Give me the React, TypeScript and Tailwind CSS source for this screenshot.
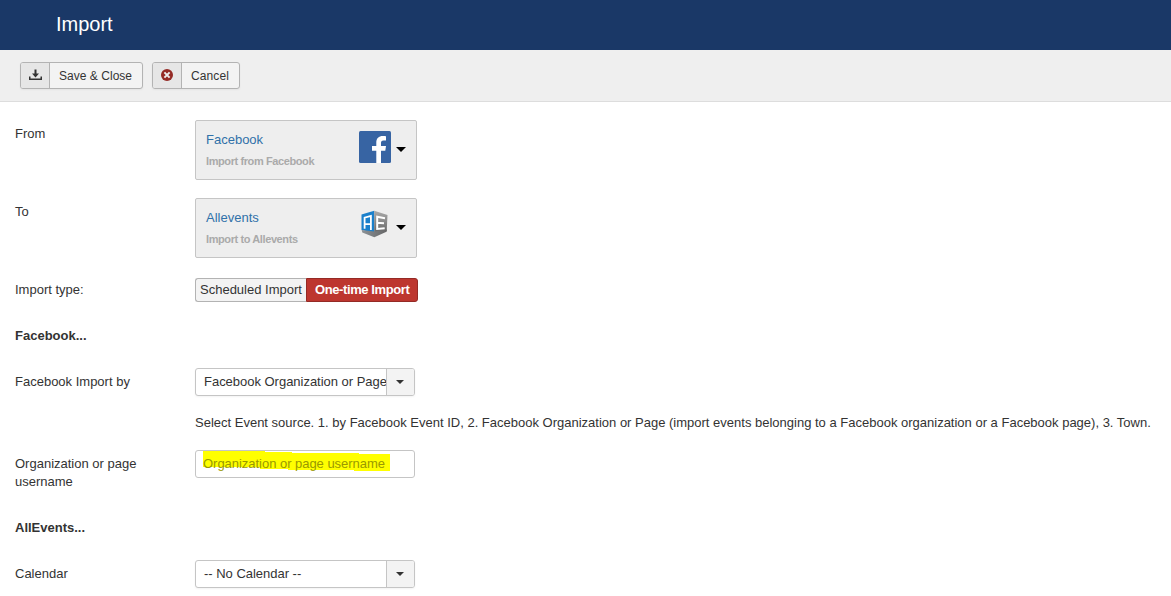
import type { ReactNode } from "react";

function Caret({ dark = false }: { dark?: boolean }) {
  return dark ? (
    <svg width="10" height="5" viewBox="0 0 10 5" className="block">
      <path d="M0 0h10L5 5z" fill="#000" />
    </svg>
  ) : (
    <svg width="8" height="4" viewBox="0 0 8 4" className="mr-px mb-px block">
      <path d="M0 0h8L4 4z" fill="#333" />
    </svg>
  );
}

function ToolButton({ icon, className, children }: { icon: ReactNode; className: string; children: ReactNode }) {
  return (
    <button
      className={`flex h-[27px] items-stretch overflow-hidden rounded-[3px] border border-[#b3b3b3] bg-[#f3f3f3] text-xs shadow-[0_1px_2px_rgba(0,0,0,0.05)] ${className}`}
    >
      <span className="flex w-[29px] shrink-0 items-center justify-center border-r border-[#b3b3b3] bg-[#e6e6e6] pb-px">{icon}</span>
      <span className="flex-1 whitespace-nowrap pl-[9px] text-left leading-[27px]">{children}</span>
    </button>
  );
}

function Row({ label, className, children }: { label: ReactNode; className: string; children?: ReactNode }) {
  return (
    <div className={`flex items-start ${className}`}>
      <div className="w-[180px] shrink-0 pt-[5px] pr-8">{label}</div>
      {children}
    </div>
  );
}

function SourceCard({ title, note, logo }: { title: ReactNode; note: ReactNode; logo: ReactNode }) {
  return (
    <div className="flex h-[60px] w-[222px] rounded-[2px] border border-[#c5c5c5] bg-[#eee] pl-[10px]">
      <div className="w-[153px] pt-[10px]">
        <div className="text-[#3071a9]">{title}</div>
        <div className="mt-[3px] text-[11px] font-bold tracking-[-0.4px] text-[#aaa]">{note}</div>
      </div>
      <div className="pt-[10px]">{logo}</div>
      <div className="pt-[26px] pl-[5px]">
        <Caret dark />
      </div>
    </div>
  );
}

function Select({ children }: { children: ReactNode }) {
  return (
    <div className="flex h-7 w-[220px] overflow-hidden rounded-[3px] border border-[#c5c5c5] bg-white shadow-[0_1px_2px_rgba(0,0,0,0.05)]">
      <div className="w-[190px] whitespace-nowrap pl-2 leading-[26px] tracking-[-0.02px]">{children}</div>
      <div className="flex flex-1 items-center justify-center border-l border-[#c5c5c5] bg-[#f3f3f3]">
        <Caret />
      </div>
    </div>
  );
}

function SaveIcon() {
  return (
    <svg width="13" height="12" viewBox="0 0 13 12">
      <path d="M5.500 0.500h2v4H10L6.500 8.500 3 4.500h2.500z" fill="#333" />
      <path d="M0 7.500h1.500v2h10v-2H13v3.500H0z" fill="#333" />
    </svg>
  );
}

function CancelIcon() {
  return (
    <svg width="12" height="12" viewBox="0 0 12 12">
      <circle cx="6" cy="6" r="6" fill="#942a25" />
      <path d="M3.400 3.400l5.200 5.200M8.600 3.400L3.400 8.600" stroke="#eee" strokeWidth="2" />
    </svg>
  );
}

function FacebookLogo() {
  return (
    <svg width="32" height="32" viewBox="0 0 32 32" className="block">
      <rect width="32" height="32" rx="1.500" fill="#3764a3" />
      <path d="M17.300 32V19.700H13v-4.700h4.300v-3.500c0-4.300 2.600-6.500 6.400-6.500 1.500 0 2.600.1 3.300.2v4.300h-2.500c-2 0-2.500 1-2.500 2.500v3H27l-.7 4.700H22V32z" fill="#fff" />
    </svg>
  );
}

function AlleventsLogo() {
  return (
    <svg width="32" height="32" viewBox="0 0 32 32" className="block">
      <defs>
        <linearGradient id="cubeRight" x1="0" y1="0" x2="0" y2="1">
          <stop offset="0" stopColor="#aaa" />
          <stop offset="1" stopColor="#666" />
        </linearGradient>
        <linearGradient id="cubeBase" x1="0" y1="0" x2="1" y2="0">
          <stop offset="0" stopColor="#8c9297" />
          <stop offset="1" stopColor="#666" />
        </linearGradient>
      </defs>
      <path d="M2.500 5.500L15.200 1.800V24L2.500 21z" fill="#1b80cb" />
      <path d="M15.200 1.800L28.500 6 27.700 22.300 15.200 24z" fill="url(#cubeRight)" />
      <path d="M2.700 21L15.200 22.500 27.900 20.500 27.500 22.800 15.300 28.300 3.300 23.500z" fill="url(#cubeBase)" />
      <path d="M5.600 19.800V8.700L11.900 7V20.900M5.600 15.200L11.900 15" fill="none" stroke="#fff" strokeWidth="1.800" />
      <path d="M26 9.300L18.200 7.800V20L25.700 19.200M18.200 13.800L25 14.200" fill="none" stroke="#fff" strokeWidth="2" />
    </svg>
  );
}

export default function App() {
  return (
    <div className="h-[596px] w-[1171px] overflow-hidden bg-white font-['Liberation_Sans',Arial,sans-serif] text-[13px] leading-[18px] text-[#333]">
      <header className="h-[50px] bg-[#1a3867] pl-14 text-xl leading-[48px] text-white">
        <h1>Import</h1>
      </header>
      <div className="flex h-[52px] gap-[9px] border-b border-[#ddd] bg-[#efefef] pt-3 pl-5">
        <ToolButton className="w-[123px]" icon={<SaveIcon />}>
          <span className="tracking-[0.03px]">Save &amp; Close</span>
        </ToolButton>
        <ToolButton className="w-[88px]" icon={<CancelIcon />}>
          <span className="tracking-[0.1px]">Cancel</span>
        </ToolButton>
      </div>

      <main className="pt-[18px] pl-[15px]">
        <Row label="From" className="h-[78px]">
          <SourceCard title="Facebook" note="Import from Facebook" logo={<FacebookLogo />} />
        </Row>
        <Row label="To" className="h-[78px]">
          <SourceCard title="Allevents" note="Import to Allevents" logo={<AlleventsLogo />} />
        </Row>
        <Row label="Import type:" className="h-[46px]">
          <div className="mt-[2px] flex h-6 leading-[22px]">
            <button className="w-[111px] whitespace-nowrap rounded-l-[3px] border border-r-0 border-[#b3b3b3] bg-[#f3f3f3] pl-1 text-left">Scheduled Import</button>
            <button className="w-[112px] whitespace-nowrap rounded-r-[3px] border border-[#942a25] bg-[#bd362f] pl-2 text-left font-bold tracking-[-0.4px] text-white">One-time Import</button>
          </div>
        </Row>
        <h2 className="h-[46px] pt-[5px] font-bold">Facebook...</h2>
        <Row label="Facebook Import by" className="h-[46px]">
          <Select>Facebook Organization or Page</Select>
        </Row>
        <p className="h-9 whitespace-nowrap pl-[180px]">
          Select Event source. 1. by Facebook Event ID, 2. Facebook Organization or Page (import events belonging to a Facebook organization or a Facebook page), 3. Town.
        </p>
        <Row label="Organization or page username" className="h-16">
          <div className="relative h-7 w-[220px] rounded-[3px] border border-[#c5c5c5] bg-white pl-[7px] leading-[26px]">
            <svg width="187" height="20" viewBox="0 0 187 20" className="absolute top-0 left-[7px]">
              <path d="M0 0h62v1h27v1h67v1h31v17h-36v-1H85v-1H57v-2H0z" fill="#ff0" />
            </svg>
            <span className="relative tracking-[-0.03px] text-[#999900]">Organization or page username</span>
          </div>
        </Row>
        <h2 className="h-[46px] pt-[5px] font-bold">AllEvents...</h2>
        <Row label="Calendar" className="h-7">
          <Select>-- No Calendar --</Select>
        </Row>
      </main>
    </div>
  );
}
